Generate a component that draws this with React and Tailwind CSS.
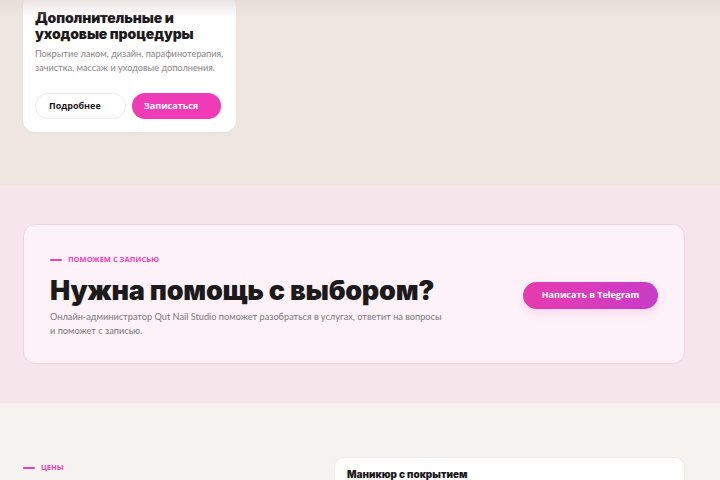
import React from 'react';

const heavy = "font-['Inter','Liberation_Sans',sans-serif] font-black";
const body = "font-['Lato','Open_Sans','Liberation_Sans',sans-serif]";

const Eyebrow = ({ children }) => (
	<div className="flex items-center gap-[6px]">
		<span className="block w-[12px] h-[2px] bg-[#ec3fb4] rounded-full" />
		<span className="font-['Open_Sans','Liberation_Sans',sans-serif] text-[7.5px] font-bold uppercase text-[#ec3fb4]">
			{children}
		</span>
	</div>
);

const App = () => {
	return (
		<div className={`${body} w-[720px] h-[480px] overflow-hidden relative bg-[#f6f2ef]`}>
			{/* header shadow */}
			<div className="absolute top-0 left-0 right-0 h-[18px] bg-gradient-to-b from-[#e2d9d5] to-transparent opacity-70 pointer-events-none z-10" />

			<section className="h-[185px] bg-[#efe6e1] px-[23px] overflow-hidden">
				<div className="w-[213px] -mt-[6px] bg-white rounded-[12px] pl-[12px] pr-[8px] pt-[16px] pb-[13px] shadow-[0_1px_3px_rgba(0,0,0,0.04)]">
					<h3 className={`${heavy} text-[14px] leading-[16px] tracking-[-0.01em] text-[#1d1a1c]`}>
						Дополнительные и уходовые процедуры
					</h3>
					<p className="mt-[5px] text-[9.2px] leading-[14px] text-[#8a8486]">
						Покрытие лаком, дизайн, парафинотерапия, зачистка, массаж и уходовые дополнения.
					</p>
					<div className="mt-[18px] flex gap-[6px] font-['Open_Sans','Liberation_Sans',sans-serif]">
						<button className="w-[91px] h-[26px] rounded-full border border-[#efe9e8] bg-white pl-[13px] text-left text-[9px] font-bold text-[#1d1a1c]">
							Подробнее
						</button>
						<button className="w-[89px] h-[26px] rounded-full bg-[#ef3bb5] pl-[12px] text-left text-[9px] font-bold text-white">
							Записаться
						</button>
					</div>
				</div>
			</section>

			<section className="bg-[#f7e5ec] px-[23px] py-[39px]">
				<div className="w-[662px] h-[140px] rounded-[12px] border border-[#f0d4e0] bg-[#fdf2f8] px-[26px] flex items-center justify-between">
					<div className="pt-[4px]">
						<Eyebrow>Поможем с записью</Eyebrow>
						<h2 className={`${heavy} mt-[9px] text-[27px] leading-[32px] tracking-[-0.01em] text-[#1d1a1c]`}>
							Нужна помощь с выбором?
						</h2>
						<p className="mt-[3px] w-[395px] text-[9.2px] leading-[14px] text-[#7b7577]">
							Онлайн-администратор Qut Nail Studio поможет разобраться в услугах, ответит на вопросы и поможет с записью.
						</p>
					</div>
					<button className="w-[135px] h-[27px] mt-[2px] rounded-full bg-gradient-to-r from-[#e83aae] to-[#c83bc9] font-['Open_Sans','Liberation_Sans',sans-serif] text-[9px] font-bold text-white shadow-[0_4px_10px_rgba(220,60,180,0.15)]">
						Написать в Telegram
					</button>
				</div>
			</section>

			<section className="px-[23px] pt-[54px] grid grid-cols-[311px_351px]">
				<div className="pt-[5px]">
					<Eyebrow>Цены</Eyebrow>
				</div>
				<div className="bg-white rounded-[10px] border border-[#f1ebe8] px-[12px] pt-[9px] h-[60px] flex justify-between">
					<span className={`${heavy} text-[10px] text-[#1d1a1c]`}>Маникюр с покрытием</span>
					<span className={`${heavy} mt-[12px] text-[11px] text-[#e43cb1]`}>от 2 500 ₽</span>
				</div>
			</section>
		</div>
	);
};

export default App;
